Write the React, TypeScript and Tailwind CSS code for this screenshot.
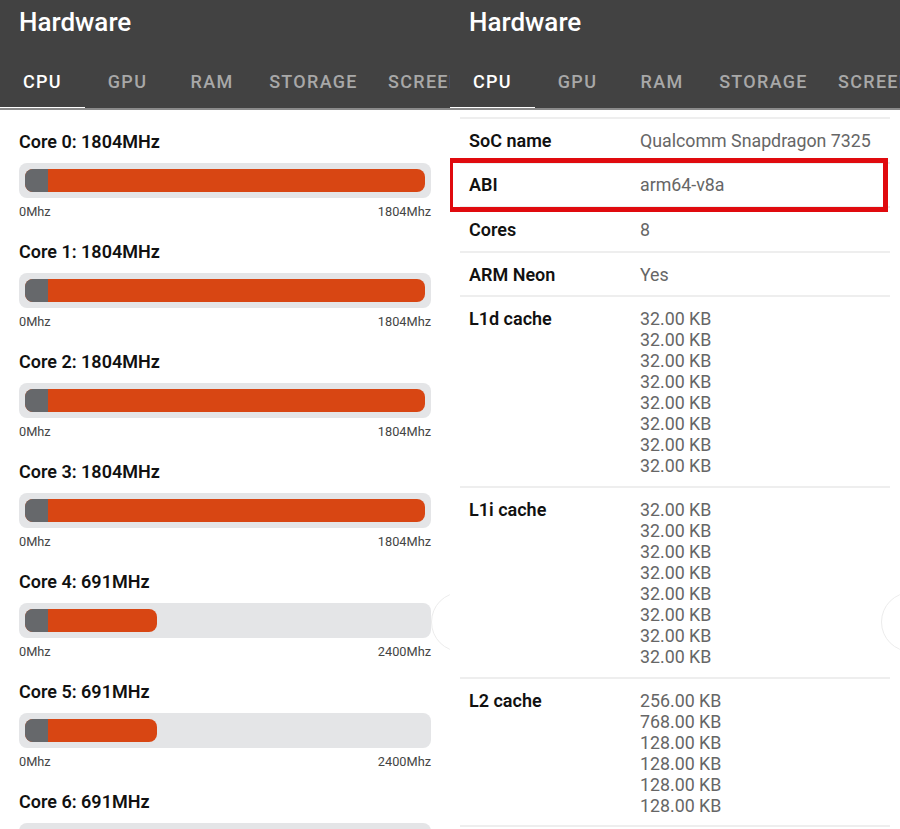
const CORES = [
  { name: 'Core 0: 1804MHz', max: '1804Mhz', width: 'w-full' },
  { name: 'Core 1: 1804MHz', max: '1804Mhz', width: 'w-full' },
  { name: 'Core 2: 1804MHz', max: '1804Mhz', width: 'w-full' },
  { name: 'Core 3: 1804MHz', max: '1804Mhz', width: 'w-full' },
  { name: 'Core 4: 691MHz', max: '2400Mhz', width: 'w-[132px]' },
  { name: 'Core 5: 691MHz', max: '2400Mhz', width: 'w-[132px]' },
  { name: 'Core 6: 691MHz', max: '2400Mhz', width: 'w-[132px]' },
];

const TABS = [
  { label: 'CPU', width: 'w-[85px]' },
  { label: 'GPU', width: 'w-[85px]' },
  { label: 'RAM', width: 'w-[84px]' },
  { label: 'STORAGE', width: 'w-[119px]' },
  { label: 'SCREEN', width: 'w-[89px]' },
];

const SPECS = [
  { label: 'SoC name', values: ['Qualcomm Snapdragon 7325'] },
  { label: 'ABI', values: ['arm64-v8a'] },
  { label: 'Cores', values: ['8'] },
  { label: 'ARM Neon', values: ['Yes'] },
  { label: 'L1d cache', values: Array(8).fill('32.00 KB') },
  { label: 'L1i cache', values: Array(8).fill('32.00 KB') },
  { label: 'L2 cache', values: ['256.00 KB', '768.00 KB', '128.00 KB', '128.00 KB', '128.00 KB', '128.00 KB'] },
];

function Header() {
  return (
    <div className="h-[110px] bg-[#424242] shrink-0 flex flex-col">
      <div className="h-[66px] pl-[19px] pt-[6px] text-[26px] leading-[32px] font-medium text-white">Hardware</div>
      <div className="flex h-[44px] overflow-hidden border-b-2 border-[#8a8a8a]">
        {TABS.map((tab, i) => (
          <div
            key={tab.label}
            className={`${tab.width} shrink-0 h-[44px] pt-[6px] text-[18px] leading-[20px] font-medium tracking-[1.3px] whitespace-nowrap ${
              i === 0 ? 'text-white border-b-[3px] border-white' : 'text-[#a8a8a8]'
            } ${i === 4 ? 'text-left pl-[15px]' : 'text-center'}`}
          >
            {tab.label}
          </div>
        ))}
      </div>
    </div>
  );
}

function EdgeHandle({ className }: { className: string }) {
  return <div className={`absolute w-[70px] h-[60px] rounded-full border border-[#ececec] ${className}`} />;
}

function CoreRow({ core }: { core: (typeof CORES)[number] }) {
  return (
    <div className="h-[110px] shrink-0 px-[19px] pt-[21px]">
      <div className="text-[18px] leading-[22px] font-semibold text-[#111]">{core.name}</div>
      <div className="mt-[10px] h-[35px] rounded-lg bg-[#e4e5e7] px-[6px] py-[6px]">
        <div className={`${core.width} h-[23px] rounded-lg bg-[#d84613] overflow-hidden`}>
          <div className="w-[23px] h-full bg-[#66686b]" />
        </div>
      </div>
      <div className="mt-[6px] flex justify-between text-[12.75px] leading-[16px] text-[#444]">
        <span>0Mhz</span>
        <span>{core.max}</span>
      </div>
    </div>
  );
}

function SpecRow({ spec }: { spec: (typeof SPECS)[number] }) {
  const multi = spec.values.length > 1;
  return (
    <div className={`flex shrink-0 mx-[10px] pl-[9px] border-b-2 border-[#eeeeee] ${multi ? 'pt-[11px] pb-[9.6px]' : 'h-[44.6px] items-center'}`}>
      <div className="w-[171px] shrink-0 text-[18px] leading-[21px] font-semibold text-[#111]">{spec.label}</div>
      <div className="text-[17.8px] leading-[21px] text-[#666] whitespace-nowrap">
        {spec.values.map((v, i) => (
          <div key={i}>{v}</div>
        ))}
      </div>
    </div>
  );
}

export default function App() {
  return (
    <div className="flex w-[900px] h-[829px] overflow-hidden bg-white font-['Roboto',sans-serif]">
      <div className="relative w-[450px] h-[829px] overflow-hidden flex flex-col">
        <Header />
        {CORES.map(core => (
          <CoreRow key={core.name} core={core} />
        ))}
        <EdgeHandle className="left-[431px] top-[592px]" />
      </div>

      <div className="relative w-[450px] h-[829px] overflow-hidden flex flex-col">
        <Header />
        <div className="mt-[7px] mx-[10px] h-[2px] shrink-0 bg-[#eeeeee]" />
        {SPECS.map(spec => (
          <SpecRow key={spec.label} spec={spec} />
        ))}
        <div className="absolute left-[-2px] top-[158px] w-[440px] h-[54px] border-[5px] border-[#e00a0e]" />
        <EdgeHandle className="left-[431px] top-[592px]" />
      </div>
    </div>
  );
}
